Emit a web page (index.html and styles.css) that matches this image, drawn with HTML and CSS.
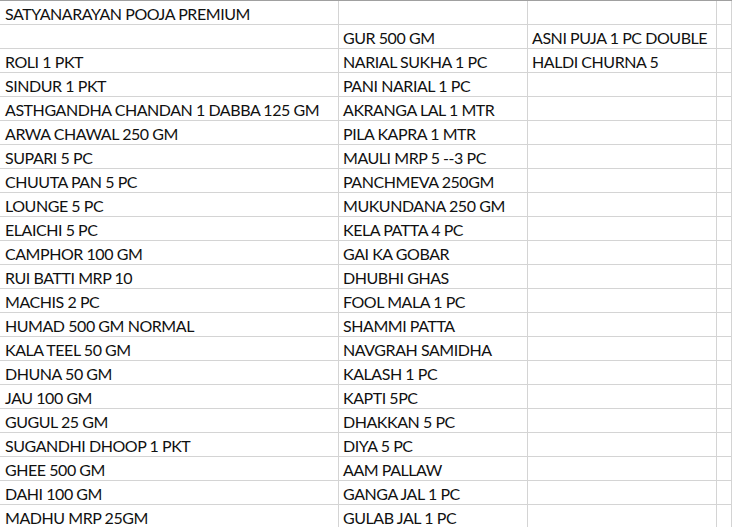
FILE: index.html
```html
<!DOCTYPE html>
<html>
<head>
<meta charset="utf-8">
<link rel="stylesheet" href="styles.css">
</head>
<body>
<div class="sheet">
  <div class="cell">SATYANARAYAN POOJA PREMIUM</div><div class="cell"></div><div class="cell"></div><div class="cell"></div>
  <div class="cell"></div><div class="cell">GUR 500 GM</div><div class="cell">ASNI PUJA 1 PC DOUBLE</div><div class="cell"></div>
  <div class="cell">ROLI 1 PKT</div><div class="cell">NARIAL SUKHA 1 PC</div><div class="cell">HALDI CHURNA 5</div><div class="cell"></div>
  <div class="cell">SINDUR 1 PKT</div><div class="cell">PANI NARIAL 1 PC</div><div class="cell"></div><div class="cell"></div>
  <div class="cell">ASTHGANDHA CHANDAN 1 DABBA 125 GM</div><div class="cell">AKRANGA LAL 1 MTR</div><div class="cell"></div><div class="cell"></div>
  <div class="cell">ARWA CHAWAL 250 GM</div><div class="cell">PILA KAPRA 1 MTR</div><div class="cell"></div><div class="cell"></div>
  <div class="cell">SUPARI 5 PC</div><div class="cell">MAULI MRP 5 --3 PC</div><div class="cell"></div><div class="cell"></div>
  <div class="cell">CHUUTA PAN 5 PC</div><div class="cell">PANCHMEVA 250GM</div><div class="cell"></div><div class="cell"></div>
  <div class="cell">LOUNGE 5 PC</div><div class="cell">MUKUNDANA 250 GM</div><div class="cell"></div><div class="cell"></div>
  <div class="cell">ELAICHI 5 PC</div><div class="cell">KELA PATTA 4 PC</div><div class="cell"></div><div class="cell"></div>
  <div class="cell">CAMPHOR 100 GM</div><div class="cell">GAI KA GOBAR</div><div class="cell"></div><div class="cell"></div>
  <div class="cell">RUI BATTI MRP 10</div><div class="cell">DHUBHI GHAS</div><div class="cell"></div><div class="cell"></div>
  <div class="cell">MACHIS 2 PC</div><div class="cell">FOOL MALA 1 PC</div><div class="cell"></div><div class="cell"></div>
  <div class="cell">HUMAD 500 GM NORMAL</div><div class="cell">SHAMMI PATTA</div><div class="cell"></div><div class="cell"></div>
  <div class="cell">KALA TEEL 50 GM</div><div class="cell">NAVGRAH SAMIDHA</div><div class="cell"></div><div class="cell"></div>
  <div class="cell">DHUNA 50 GM</div><div class="cell">KALASH 1 PC</div><div class="cell"></div><div class="cell"></div>
  <div class="cell">JAU 100 GM</div><div class="cell">KAPTI 5PC</div><div class="cell"></div><div class="cell"></div>
  <div class="cell">GUGUL 25 GM</div><div class="cell">DHAKKAN 5 PC</div><div class="cell"></div><div class="cell"></div>
  <div class="cell">SUGANDHI DHOOP 1 PKT</div><div class="cell">DIYA 5 PC</div><div class="cell"></div><div class="cell"></div>
  <div class="cell">GHEE 500 GM</div><div class="cell">AAM PALLAW</div><div class="cell"></div><div class="cell"></div>
  <div class="cell">DAHI 100 GM</div><div class="cell">GANGA JAL 1 PC</div><div class="cell"></div><div class="cell"></div>
  <div class="cell">MADHU MRP 25GM</div><div class="cell">GULAB JAL 1 PC</div><div class="cell"></div><div class="cell"></div>
</div>
</body>
</html>
```
FILE: styles.css
```css
html, body {
  margin: 0;
  padding: 0;
  background: #ffffff;
  overflow: hidden;
}
.sheet {
  display: grid;
  grid-template-columns: 339px 189px 189px 1fr;
  grid-auto-rows: 24px;
  border-top: 1px solid #a0a0a0;
  font-family: Lato, "Liberation Sans", sans-serif;
  font-size: 16px;
  letter-spacing: -0.45px;
  color: #111111;
}
.cell {
  box-sizing: border-box;
  border-right: 1px solid #d4d4d4;
  border-bottom: 1px solid #d4d4d4;
  padding: 1px 0 0 4px;
  white-space: nowrap;
  overflow: hidden;
  line-height: 23px;
}
.cell:nth-child(4n+1) {
  padding-left: 5px;
}
```
